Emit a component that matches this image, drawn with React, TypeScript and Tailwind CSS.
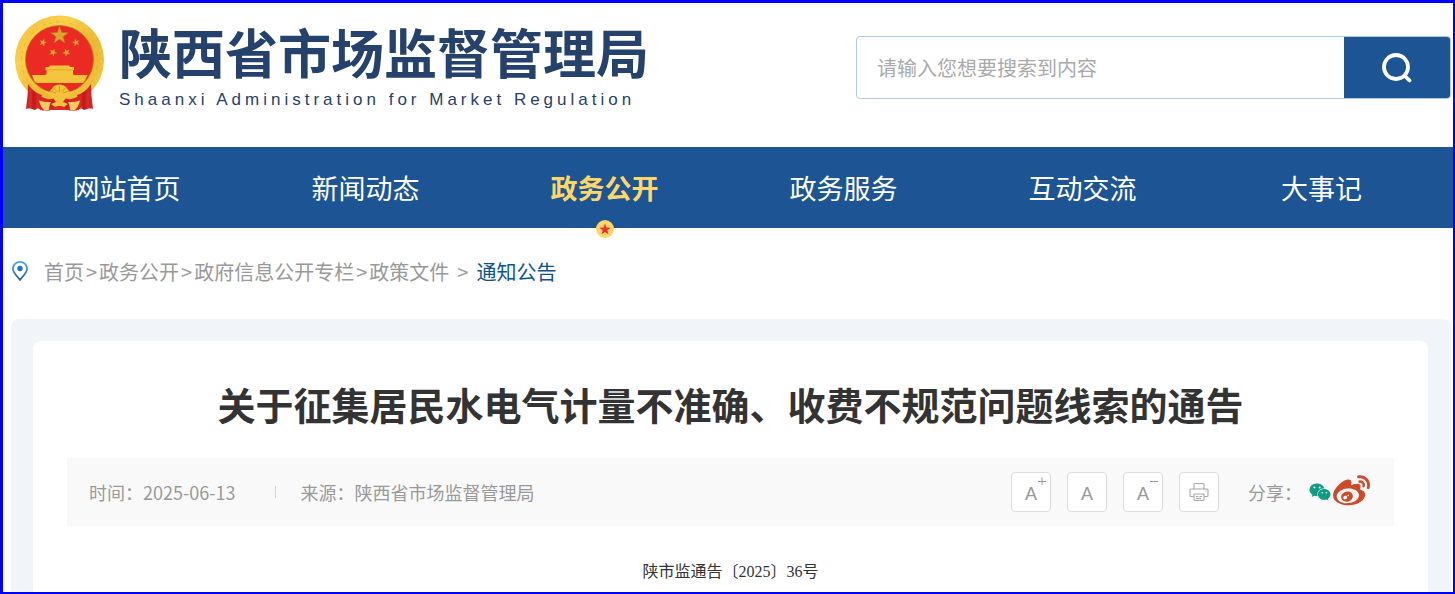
import { FaWeibo, FaWeixin } from 'react-icons/fa';

interface NavItem {
  label: string;
  active?: boolean;
}

const navItems: NavItem[] = [
  { label: '网站首页' },
  { label: '新闻动态' },
  { label: '政务公开', active: true },
  { label: '政务服务' },
  { label: '互动交流' },
  { label: '大事记' },
];

const crumbs = ['首页', '政务公开', '政府信息公开专栏', '政策文件'];

const STAR = 'M0 -10 L2.35 -3.24 L9.51 -3.09 L3.8 1.24 L5.88 8.09 L0 4 L-5.88 8.09 L-3.8 1.24 L-9.51 -3.09 L-2.35 -3.24 Z';

function Emblem() {
  return (
    <svg viewBox="0 0 90 96" className="h-24 w-[90px] shrink-0" aria-hidden="true">
      <defs>
        <linearGradient id="gold" x1="0" y1="0" x2="1" y2="1">
          <stop offset="0" stopColor="#efbd38" />
          <stop offset="0.3" stopColor="#f9d04a" />
          <stop offset="0.6" stopColor="#ebb833" />
          <stop offset="1" stopColor="#f4c742" />
        </linearGradient>
        <linearGradient id="ribbon" x1="0" y1="0" x2="1" y2="0">
          <stop offset="0" stopColor="#b81b1b" />
          <stop offset="0.25" stopColor="#e32a26" />
          <stop offset="0.45" stopColor="#b81b1b" />
          <stop offset="0.7" stopColor="#e02825" />
          <stop offset="1" stopColor="#c51f1e" />
        </linearGradient>
      </defs>
      <circle cx="44.5" cy="45" r="44.5" fill="url(#gold)" />
      <circle cx="44.5" cy="45" r="38" fill="none" stroke="#dfa424" strokeWidth="1" strokeDasharray="2 5 4 3" opacity="0.5" />
      <circle cx="44.5" cy="45" r="42" fill="none" stroke="#ffe06a" strokeWidth="1" strokeDasharray="3 4 1 6" opacity="0.6" />
      <circle cx="44.5" cy="44.500" r="34" fill="#eb2a24" stroke="#b9791c" strokeWidth="0.8" />
      {/* Stars */}
      <g fill="#dba52f" stroke="#b9781b" strokeWidth="0.5">
        <path d={STAR} transform="translate(44.5 20.5) scale(.92)" />
        <path d={STAR} transform="translate(28 27.5) rotate(15) scale(.4)" />
        <path d={STAR} transform="translate(61 27.5) rotate(-15) scale(.4)" />
        <path d={STAR} transform="translate(38 37.5) rotate(25) scale(.42)" />
        <path d={STAR} transform="translate(51.5 37.5) rotate(-25) scale(.42)" />
      </g>
      {/* Gate tower */}
      <path d="M35 50.500h19l1.500 1.500H59v3h-1v4.500h1v1.500H30.500v-1.500h1V55h-1v-3H34z" fill="#f4c63f" />
      <path d="M31 54.800h27" stroke="#d9961f" strokeWidth="0.7" />
      <path d="M17 60h55.500l-2.500 5.500q-1 2.500-4 2.500H23q-3 0-4-2.500z" fill="#f3c43c" />
      {/* Gear and wheat */}
      <path d="M29 75l5 2 5-6q5.500-3 11 0l5 6 5-2-6 7-4 4H39l-4-4z" fill="#f2c23b" />
      <path d="M35 76l6 2M38 72.500l4 4M44.500 71v6M51 72.500l-4 4M54 76l-6 2" stroke="#d9981f" strokeWidth="1" />
      {/* Ribbons */}
      <path d="M13 69c4 6 8 9 14 11-2 5-1 9 1 13l-2 2.500c-3-3-4-2-6-.5-3-1-6-2-9-1 1-8 2-16 2-25z" fill="url(#ribbon)" />
      <path d="M76 69c-4 6-8 9-14 11 2 5 1 9-1 13l2 2.500c3-3 4-2 6-.5 3-1 6-2 9-1-1-8-2-16-2-25z" fill="url(#ribbon)" />
      <path d="M25 81q9 5 14 2l2 5-6 7.500h-8q-3-7-2-14.500zM64 81q-9 5-14 2l-2 5 6 7.500h8q3-7 2-14.500z" fill="#d62522" />
      <path d="M24 85.500q6 2 12 1.500 3 3 1 8h-8q-4-4-5-9.500zM65 85.500q-6 2-12 1.500-3 3-1 8h8q4-4 5-9.500z" fill="#f3cb62" />
      <path d="M34 95q0-8 5-11h11q5 3 5 11z" fill="#cf201d" />
      <path d="M38 83h13l-3 4 5 2-4 3q-4.500-2-9 0l-4-3 5-2z" fill="#f2c23b" />
      <path d="M33 95q11.500-7 23 0z" fill="#e02a24" />
    </svg>
  );
}

function SearchIcon() {
  return (
    <svg viewBox="0 0 30 30" className="size-[30px]" fill="none" stroke="#fff" strokeWidth="3.8" strokeLinecap="round" aria-hidden="true">
      <circle cx="14" cy="14" r="12" />
      <path d="M22.5 22.5l5 5" />
    </svg>
  );
}

function PinIcon() {
  return (
    <svg viewBox="0 0 16 20" className="mb-0.5 h-5 w-4 shrink-0" aria-hidden="true">
      <defs>
        <linearGradient id="pin" x1="0" y1="0" x2="0" y2="1">
          <stop offset="0" stopColor="#4ba6ea" />
          <stop offset="1" stopColor="#22579b" />
        </linearGradient>
      </defs>
      <path d="M8 .9C4 .9 .9 4 .9 7.7c0 3.800 4 7.300 7.100 11.200 3.100-3.900 7.100-7.400 7.100-11.200C15.100 4 12 .9 8 .9z" fill="#fff" stroke="url(#pin)" strokeWidth="1.7" />
      <circle cx="8" cy="7.500" r="2.700" fill="#1c75c9" />
    </svg>
  );
}

function PrinterIcon() {
  return (
    <svg viewBox="0 0 20 20" className="size-5" fill="none" stroke="#a8a8a8" strokeWidth="1.1" strokeLinejoin="round" aria-hidden="true">
      <path d="M5 7V2.500q0-1 1-1h8q1 0 1 1V7" />
      <path d="M5 14.500H2q-1 0-1-1V8q0-1 1-1h16q1 0 1 1v5.500q0 1-1 1h-3" />
      <path d="M5 12h10v5.500q0 1-1 1H6q-1 0-1-1zM7 14.500h2.500M10.500 14.500H13M7 16.500h5M16.500 9h1" />
    </svg>
  );
}

function SizeButton({ label, sign }: { label: string; sign?: 'plus' | 'minus' }) {
  return (
    <button
      type="button"
      aria-label={label}
      className="relative flex size-10 items-center justify-center rounded-sm border border-[#dcdcdc] bg-white pt-1 font-['Liberation_Sans',sans-serif] text-lg leading-5 text-[#999]"
    >
      A
      {sign && (
        <svg viewBox="0 0 8 8" className="absolute top-1 right-1 size-2" stroke="#999" aria-hidden="true">
          <path d={sign === 'plus' ? 'M0 4.500h8M4 .5v8' : 'M0 4.500h8'} strokeWidth="1" />
        </svg>
      )}
    </button>
  );
}

export default function App() {
  return (
    <div className="flex min-h-screen flex-col border-t-[3px] border-r-2 border-b-2 border-l-[3px] border-[#0000ff] bg-white font-['Noto_Sans_CJK_SC',sans-serif]">
      <header className="flex h-36 items-start justify-between pr-0.5 pl-3">
        <a href="#" className="flex pt-3 text-[#24426b]">
          <Emblem />
          <span className="-mt-[3px] flex flex-col pl-3.5">
            <span className="text-[53px] leading-[78px] font-bold whitespace-nowrap">陕西省市场监督管理局</span>
            <span className="font-['Liberation_Sans',sans-serif] text-[17px] leading-5 tracking-[4px] whitespace-nowrap">
              Shaanxi Administration for Market Regulation
            </span>
          </span>
        </a>
        <form className="mt-[33px] flex h-[63px] w-[595px] overflow-hidden rounded-[4px] border border-[#b0cbe0]">
          <input
            type="text"
            aria-label="搜索"
            placeholder="请输入您想要搜索到内容"
            className="min-w-0 flex-1 px-5 text-xl outline-none placeholder:text-[#aaa]"
          />
          <button type="button" aria-label="搜索" className="flex w-[106px] items-center justify-center bg-[#1c5494]">
            <SearchIcon />
          </button>
        </form>
      </header>

      <nav className="flex h-[81px] bg-[#1c5494] pr-3 pl-1">
        {navItems.map((item) => (
          <a
            key={item.label}
            href="#"
            className={`relative flex flex-1 items-center justify-center pt-px text-[27px] ${item.active ? 'font-bold text-[#ffd769]' : 'text-white'}`}
          >
            {item.label}
            {item.active && (
              <svg viewBox="0 0 18 18" className="absolute -bottom-2.5 left-1/2 size-[18px] -translate-x-1/2" aria-hidden="true">
                <circle cx="9" cy="9" r="9" fill="#ffd769" />
                <path d={STAR} transform="translate(9 9.500) scale(.6)" fill="#f02f2a" />
              </svg>
            )}
          </a>
        ))}
      </nav>

      <div className="flex items-center pt-[30px] pb-[33px] pl-[9px] text-xl leading-7 text-[#999]">
        <PinIcon />
        <div className="flex pl-4">
          {crumbs.map((crumb, index) => (
            <span key={crumb} className="flex">
              {index > 0 && <span className="px-0.5">&gt;</span>}
              <a href="#">{crumb}</a>
            </span>
          ))}
          <span className="px-2">&gt;</span>
          <a href="#" className="text-[#0b5394]">通知公告</a>
        </div>
      </div>

      <main className="mr-0.5 ml-2 flex flex-1 flex-col rounded-t-lg bg-[#f1f5f9] pt-[22px] pr-[23px] pl-[22px]">
        <article className="flex-1 rounded-t-lg bg-white px-[34px]">
          <h1 className="pt-[33px] text-center text-[38px] leading-[60px] font-bold text-[#333]">
            关于征集居民水电气计量不准确、收费不规范问题线索的通告
          </h1>
          <div className="mt-6 flex h-[68px] items-center justify-between bg-[#f9f9f9] pr-6 pl-[22px] text-lg text-[#999]">
            <div className="flex items-center">
              <span>时间：2025-06-13</span>
              <span className="mr-6 ml-10 h-3 w-px bg-[#d4d4d4]" />
              <span>来源：陕西省市场监督管理局</span>
            </div>
            <div className="flex items-center">
              <div className="flex gap-4">
                <SizeButton label="放大字体" sign="plus" />
                <SizeButton label="默认字体" />
                <SizeButton label="缩小字体" sign="minus" />
                <button type="button" aria-label="打印" className="flex size-10 items-center justify-center rounded-sm border border-[#dcdcdc] bg-white">
                  <PrinterIcon />
                </button>
              </div>
              <span className="pl-[29px]">分享：</span>
              <a href="#" aria-label="微信" className="ml-[7px] text-[#109c82]">
                <FaWeixin className="size-[22px]" />
              </a>
              <a href="#" aria-label="微博" className="ml-0.5 pb-0.5 text-[#cf4a2b]">
                <FaWeibo className="size-[37px]" />
              </a>
            </div>
          </div>
          <p className="pt-[34px] text-center font-['Liberation_Serif','Noto_Sans_CJK_SC',serif] text-base leading-6 text-[#333]">
            陕市监通告〔2025〕36号
          </p>
        </article>
      </main>
    </div>
  );
}
